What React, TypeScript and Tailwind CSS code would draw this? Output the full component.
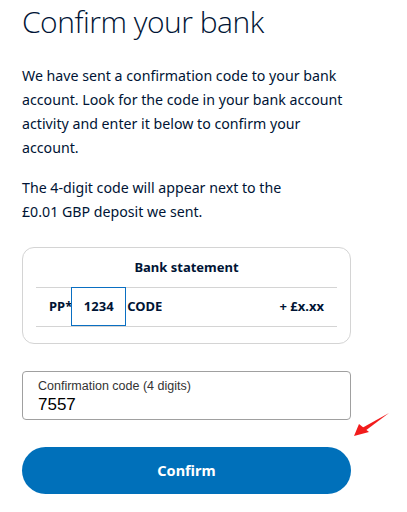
export default function App() {
  return (
    <div className="relative h-[512px] w-[407px] overflow-hidden bg-white px-[22px] text-[#001435] [font-family:'Noto_Sans',sans-serif]">
      <h1 className="pt-[2px] text-[30px] font-light leading-[40px] tracking-[-0.5px] text-[#001435] [font-family:'Open_Sans',sans-serif]">
        Confirm your bank
      </h1>

      <p className="mt-[22px] w-[330px] text-[14.2px] leading-[24px]">
        We have sent a confirmation code to your bank account. Look for the code in your bank account activity and enter it below to confirm your account.
      </p>
      <p className="mt-[16px] w-[330px] text-[14.2px] leading-[24px]">
        The 4-digit code will appear next to the
        <br />
        £0.01 GBP deposit we sent.
      </p>

      <div className="mt-[23px] w-[329px] rounded-[12px] border border-[#d4d4d4] px-[13px] pb-[16px]">
        <div className="py-[10px] text-center text-[13px] font-bold leading-[19px]">Bank statement</div>
        <div className="flex h-[40px] items-center border-y border-[#d4d4d4] pl-[13px] pr-[13px] text-[13px] font-bold">
          <span>PP*</span>
          <span className="-ml-[1px] -mt-[1px] flex h-[39px] w-[55px] items-center justify-center border border-[#0a6fc2] bg-white">1234</span>
          <span className="ml-[1px]">CODE</span>
          <span className="ml-auto">+ £x.xx</span>
        </div>
      </div>

      <div className="mt-[27px] h-[49px] w-[329px] rounded-[4px] border border-[#a0a0a0] px-[15px] pt-[6px] [font-family:'Liberation_Sans',Arial,sans-serif]">
        <div className="text-[12.5px] leading-[16px] text-[#333]">Confirmation code (4 digits)</div>
        <div className="text-[17px] leading-[22px] text-black">7557</div>
      </div>

      <button className="mt-[27px] flex h-[47px] w-[329px] items-center justify-center rounded-full bg-[#0070ba] text-[14.5px] font-bold text-white">
        Confirm
      </button>

      <svg className="absolute left-[350px] top-[408px]" width="44" height="32" viewBox="0 0 44 32">
        <path d="M39 5 L12 20 L15 23 Z" fill="#f21c1c" />
        <path d="M4 28 L9 16 L19 24 Z" fill="#f21c1c" />
      </svg>
    </div>
  );
}
